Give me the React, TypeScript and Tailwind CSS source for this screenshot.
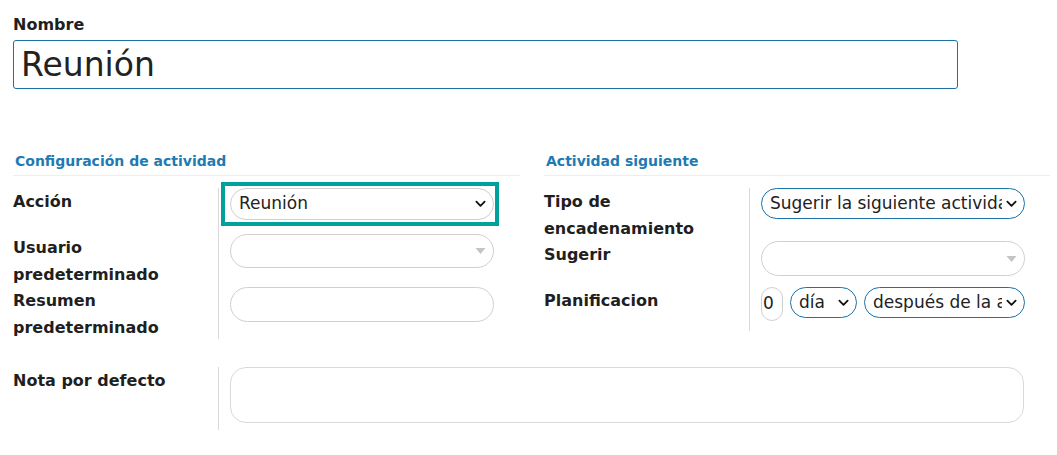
import { ReactNode } from 'react';

// Activity type form — two-column settings with a highlighted "Acción" field

function Chevron() {
  return (
    <svg viewBox="0 0 12 8" className="w-[11px] h-[8px] shrink-0" aria-hidden="true">
      <path d="M1.5 1.5 L6 6 L10.5 1.5" fill="none" stroke="#111" strokeWidth="2" strokeLinecap="round" strokeLinejoin="round" />
    </svg>
  );
}

function Caret() {
  return (
    <svg viewBox="0 0 10 6" className="w-[11px] h-[6px] shrink-0" aria-hidden="true">
      <path d="M0 0 L10 0 L5 6 Z" fill="#c4c4c4" />
    </svg>
  );
}

function Select({ value, blue, className = '' }: { value?: string; blue?: boolean; className?: string }) {
  return (
    <div
      className={`flex items-center gap-1 rounded-full border bg-white pl-[8px] pr-[7px] ${
        blue ? 'border-[#1a72a8]' : 'border-[#d0d0d0]'
      } ${className}`}
    >
      <span className="flex-1 min-w-0 overflow-hidden whitespace-nowrap text-[17px] text-[#222]">{value}</span>
      {value ? <Chevron /> : <Caret />}
    </div>
  );
}

function Row({ label, children, className = '' }: { label: ReactNode; children: ReactNode; className?: string }) {
  return (
    <div className={`flex ${className}`}>
      <div className="w-[205px] shrink-0 text-[16px] font-bold leading-[27px] text-[#1f1f1f]">{label}</div>
      <div className="min-w-0 flex-1 border-l border-[#d9d9d9] pl-[11px]">{children}</div>
    </div>
  );
}

export default function App() {
  return (
    <div className="w-[1057px] h-[455px] bg-white pl-[13px] pr-[7px] pt-[14px] font-['DejaVu_Sans',sans-serif] text-[#222]">
      <label className="block text-[16px] font-bold leading-[22px] text-[#1f1f1f]">Nombre</label>
      <div className="mt-[4px] flex h-[49px] w-[945px] items-center rounded-[3px] border border-[#1a72a8] px-[7px] text-[33px] text-[#222]">
        Reunión
      </div>

      <div className="mt-[62px] flex gap-[24px]">
        {/* Configuración de actividad */}
        <section className="w-[507px] shrink-0">
          <h2 className="border-b border-[#eeeeee] pb-[4px] pl-[2px] text-[14px] font-bold leading-[20px] text-[#1f7ab3]">
            Configuración de actividad
          </h2>
          <div className="mt-[12px] pr-[26px]">
            <Row label="Acción" className="h-[46px]">
              <div className="relative">
                <Select value="Reunión" className="h-[32px]" />
                <div className="pointer-events-none absolute -top-[6px] -bottom-[6px] -left-[9px] -right-[5px] border-4 border-[#00a09d]" />
              </div>
            </Row>
            <Row label={<>Usuario<br />predeterminado</>} className="h-[53px]">
              <Select className="h-[34px]" />
            </Row>
            <Row label={<>Resumen<br />predeterminado</>} className="h-[52px]">
              <div className="h-[35px] rounded-full border border-[#d0d0d0]" />
            </Row>
          </div>
        </section>

        {/* Actividad siguiente */}
        <section className="min-w-0 flex-1">
          <h2 className="border-b border-[#eeeeee] pb-[4px] pl-[2px] text-[14px] font-bold leading-[20px] text-[#1f7ab3]">
            Actividad siguiente
          </h2>
          <div className="mt-[12px] pr-[25px]">
            <Row label={<>Tipo de<br />encadenamiento</>} className="h-[53px]">
              <Select value="Sugerir la siguiente actividad" blue className="h-[31px]" />
            </Row>
            <Row label="Sugerir" className="h-[46px]">
              <Select className="h-[35px]" />
            </Row>
            <Row label="Planificacion" className="h-[44px]">
              <div className="flex items-start gap-[7px]">
                <div className="flex h-[34px] w-[22px] shrink-0 items-center overflow-hidden rounded-full border border-[#d0d0d0] pl-[1px] text-[17px]">
                  0
                </div>
                <Select value="día" blue className="h-[31px] w-[67px] shrink-0" />
                <Select value="después de la actividad anterior" blue className="h-[31px] min-w-0 flex-1" />
              </div>
            </Row>
          </div>
        </section>
      </div>

      <div className="mt-[28px] w-[1011px]">
        <Row label="Nota por defecto" className="h-[63px]">
          <div className="h-[56px] rounded-[16px] border border-[#d9d9d9]" />
        </Row>
      </div>
    </div>
  );
}
